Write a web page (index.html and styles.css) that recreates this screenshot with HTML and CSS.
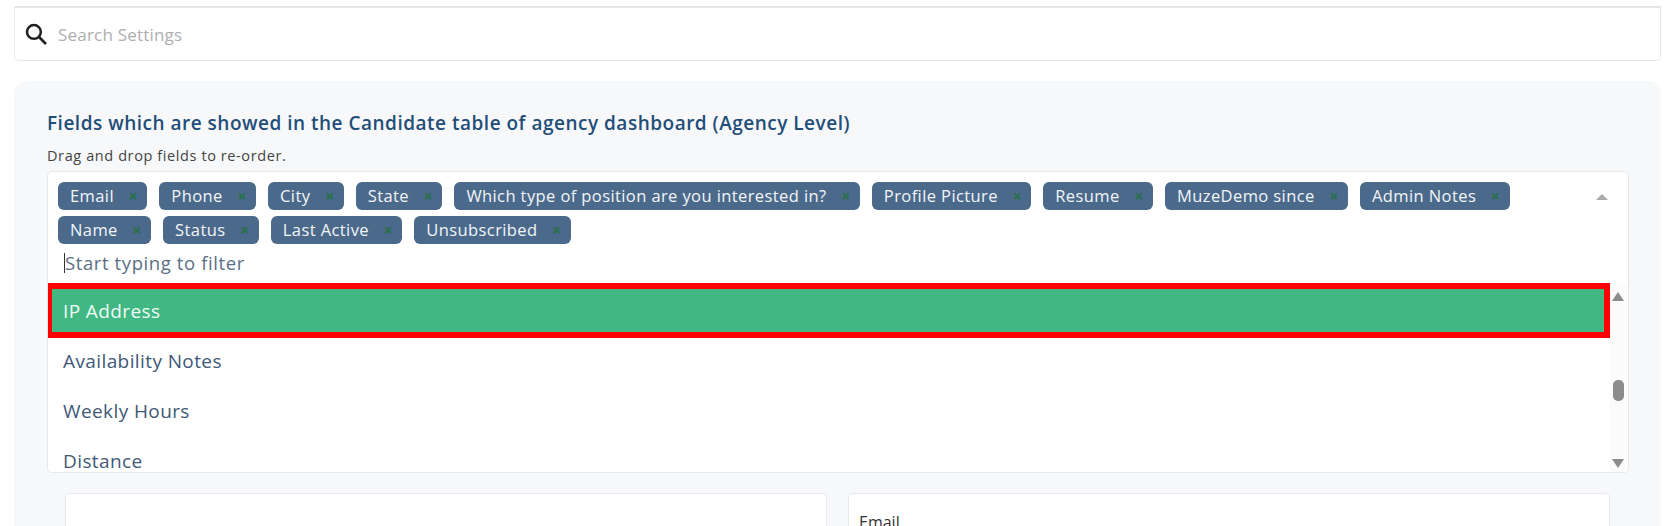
FILE: index.html
```html
<!DOCTYPE html>
<html lang="en-us">
  <head>
    <meta charset="utf-8" />
    <title>Settings</title>
    <link rel="stylesheet" href="styles.css">
  </head>
  <body>
    <div class="search">
      <svg class="search-icon" viewBox="0 0 21 21" width="22" height="22">
        <circle cx="8.5" cy="8.5" r="6.6" fill="none" stroke="#222" stroke-width="2.4" />
        <path d="M13.4 13.4 L20 20" stroke="#222" stroke-width="2.6" fill="none" />
      </svg>
      <span class="search-text">Search Settings</span>
    </div>

    <main class="panel">
      <h2 class="title">Fields which are showed in the Candidate table of agency dashboard (Agency Level)</h2>
      <p class="hint">Drag and drop fields to re-order.</p>

      <div class="select">
        <div class="tags">
          <span class="tag">Email<i>×</i></span>
          <span class="tag">Phone<i>×</i></span>
          <span class="tag">City<i>×</i></span>
          <span class="tag">State<i>×</i></span>
          <span class="tag">Which type of position are you interested in?<i>×</i></span>
          <span class="tag">Profile Picture<i>×</i></span>
          <span class="tag">Resume<i>×</i></span>
          <span class="tag">MuzeDemo since<i>×</i></span>
          <span class="tag">Admin Notes<i>×</i></span>
          <span class="tag">Name<i>×</i></span>
          <span class="tag">Status<i>×</i></span>
          <span class="tag">Last Active<i>×</i></span>
          <span class="tag">Unsubscribed<i>×</i></span>
        </div>
        <span class="caret"></span>
        <div class="filter"><span class="cursor"></span>Start typing to filter</div>
        <div class="dropdown">
          <ul class="options">
            <li class="option selected">IP Address</li>
            <li class="option">Availability Notes</li>
            <li class="option">Weekly Hours</li>
            <li class="option">Distance</li>
          </ul>
          <div class="scrollbar">
            <span class="arrow-up"></span>
            <span class="thumb"></span>
            <span class="arrow-down"></span>
          </div>
        </div>
      </div>

      <div class="cards">
        <div class="card"></div>
        <div class="card"><label class="card-label">Email</label></div>
      </div>
    </main>
  </body>
</html>
```

FILE: styles.css
```css
html,
body {
  height: 526px;
  overflow: hidden;
}

body {
  margin: 0;
  padding: 6px 16px 0 14px;
  background-color: #fff;
  font-family: "Open Sans", "Liberation Sans", sans-serif;
}

.search {
  display: flex;
  align-items: center;
  height: 55px;
  box-sizing: border-box;
  padding: 0 0 0 10px;
  border: 1px solid #e6e8ec;
  border-top: 2px solid #e4e5e7;
  border-radius: 0 0 5px 5px;
}

.search-icon {
  margin-right: 11px;
}

.search-text {
  font-size: 17px;
  color: #aeaeae;
  letter-spacing: 0.2px;
}

.panel {
  margin-top: 20px;
  padding: 30px 32px 0 33px;
  height: 460px;
  box-sizing: border-box;
  background-color: #f7f8fa;
  border-radius: 12px 12px 0 0;
}

.title {
  margin: 0;
  font-size: 19px;
  line-height: 24px;
  font-weight: 600;
  color: #1f4e79;
  letter-spacing: 0.5px;
}

.hint {
  margin: 9px 0 3px;
  font-size: 14.5px;
  line-height: 24px;
  color: #444;
  letter-spacing: 0.6px;
}

.select {
  position: relative;
  height: 302px;
  box-sizing: border-box;
  border: 1px solid #e6e8ec;
  border-radius: 5px;
  background-color: #fff;
  overflow: hidden;
}

.tags {
  display: flex;
  flex-wrap: wrap;
  gap: 6px 12px;
  height: 62px;
  padding: 10px 80px 0 10px;
}

.tag {
  display: flex;
  align-items: center;
  height: 28px;
  padding: 0 9px 1px 12px;
  box-sizing: border-box;
  border-radius: 6px;
  background-color: #4b6a8b;
  color: #f2f5f8;
  font-size: 16.5px;
  letter-spacing: 0.4px;
}

.tag i {
  margin-left: 14.6px;
  font-style: normal;
  font-weight: 800;
  font-size: 16px;
  color: #2a6f50;
}

.caret {
  position: absolute;
  top: 22px;
  right: 20px;
  border-left: 6px solid transparent;
  border-right: 6px solid transparent;
  border-bottom: 6px solid #aaa;
}

.filter {
  display: flex;
  align-items: center;
  height: 37px;
  padding: 0 0 2px 16px;
  font-size: 18.5px;
  color: #5a6f86;
  letter-spacing: 0.6px;
}

.cursor {
  width: 1px;
  height: 20px;
  background-color: #333;
}

.dropdown {
  display: flex;
  height: 190px;
}

.options {
  flex: 1;
  margin: 0 0 0 -2px;
  padding: 0;
  list-style: none;
  overflow: hidden;
}

.option {
  height: 50px;
  line-height: 47px;
  padding-left: 17px;
  font-size: 19px;
  color: #3f5878;
  letter-spacing: 0.4px;
}

.selected {
  height: 55px;
  box-sizing: border-box;
  line-height: 44px;
  padding-left: 11px;
  border: 6px solid #f00;
  background-color: #41b883;
  color: #f2fbf7;
}

.scrollbar {
  position: relative;
  width: 18px;
  background-color: #fbfbfb;
}

.arrow-up,
.arrow-down {
  position: absolute;
  left: 2px;
  border-left: 6.5px solid transparent;
  border-right: 6.5px solid transparent;
}

.arrow-up {
  top: 9px;
  border-bottom: 9px solid #8c8c8c;
}

.arrow-down {
  bottom: 5px;
  border-top: 9px solid #8c8c8c;
}

.thumb {
  position: absolute;
  top: 97px;
  left: 3px;
  width: 11px;
  height: 21px;
  border-radius: 5px;
  background-color: #8c8c8c;
}

.cards {
  display: grid;
  grid-template-columns: 1fr 1fr;
  gap: 21px;
  margin-top: 20px;
  padding: 0 19px 0 18px;
}

.card {
  height: 120px;
  padding: 17px 10px;
  border: 1px solid #e6e8ec;
  border-radius: 5px;
  background-color: #fff;
}

.card-label {
  font-size: 16px;
  color: #333;
}
```
